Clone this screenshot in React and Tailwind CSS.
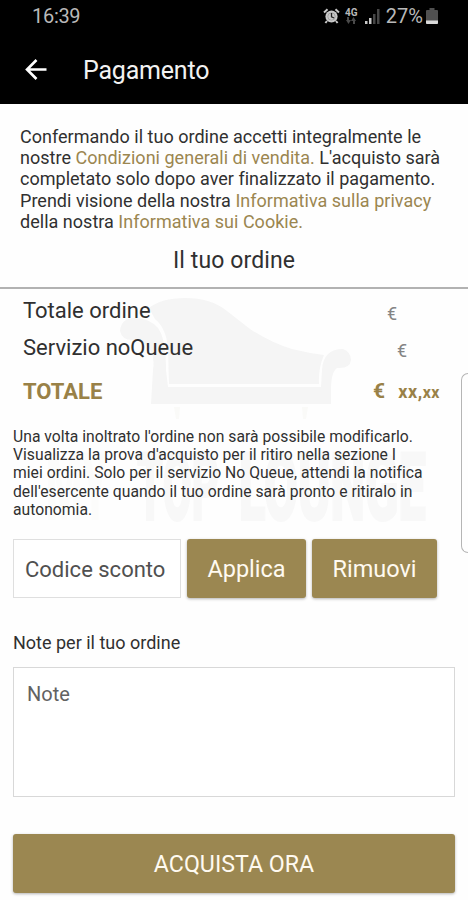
const GoldLink = ({ children }) => <a className="text-[#9b8650]">{children}</a>;

const StatusBar = () => (
  <div className="flex h-8 items-center justify-between pl-8 pr-[30px] text-[#b9b9b9]">
    <span className="text-[20px] leading-8 tracking-[-0.3px]">16:39</span>
    <div className="flex items-center">
      {/* Alarm */}
      <svg width="17" height="16" viewBox="0 0 17 16" className="mr-[5px]">
        <circle cx="8.5" cy="8.5" r="6.1" fill="#c8c8c8" />
        <path d="M1 4.5 4.5 1.3M16 4.5 12.5 1.3M4 13l-1.6 2M13 13l1.6 2" stroke="#c8c8c8" strokeWidth="2" fill="none" />
        <circle cx="8.5" cy="8.5" r="3.7" fill="none" stroke="#999" strokeWidth="0.8" />
        <path d="M8.5 5v3.8l2.6 1.2" stroke="#222" strokeWidth="1.3" fill="none" />
      </svg>
      {/* Network */}
      <div className="mr-[7px] flex w-[13px] flex-col items-center">
        <span className="text-[10px] font-bold leading-[9px]">4G</span>
        <svg width="10" height="7" viewBox="0 0 10 7" fill="#4a4a4a">
          <path d="M3 0v3h2L2.5 7 0 3h1V0zM7 7V4H5l2.5-4L10 4H9v3z" />
        </svg>
      </div>
      <svg width="15" height="15" viewBox="0 0 15 15" className="mr-[6px]">
        <path d="M0 12h2.5v3H0zM4 9h2.5v6H4z" fill="#c8c8c8" />
        <path d="M8 5h2.5v10H8zM12 0h2.5v15H12z" fill="#464646" />
      </svg>
      <span className="mr-[3px] text-[20px] leading-8">27%</span>
      <svg width="12" height="16" viewBox="0 0 12 16">
        <path d="M3.5 0h5v2H11q1 0 1 1v12q0 1-1 1H1q-1 0-1-1V3q0-1 1-1h2.5z" fill="#505050" />
        <path d="M0 12.5h12V15q0 1-1 1H1q-1 0-1-1z" fill="#dadada" />
      </svg>
    </div>
  </div>
);

const Header = () => (
  <div className="flex h-[72px] items-center pl-[25px] pt-1">
    <svg width="22" height="22" viewBox="0 0 22 22" fill="none" stroke="#fff" strokeWidth="2.6">
      <path d="M21.5 10.5H2.5M11.5 1 2 10.5l9.5 9.5" />
    </svg>
    <h1 className="ml-9 pt-0.5 text-[25px] leading-8 tracking-[-0.2px] text-[#f2f2f2]">Pagamento</h1>
  </div>
);

// Pale brand mark that sits behind the order summary
const Watermark = () => (
  <svg className="pointer-events-none absolute left-0 top-[184px] -z-10" width="468" height="240" viewBox="0 288 468 240" fill="#f5f5f5" aria-hidden="true">
    <path d="M149 308Q161 298 185 298Q211 298 227 311L250 329Q272 343 292 349Q308 353 324 355Q318 369 319 384H169L168 350Q167 329 155 319Z" />
    <path d="M120 331Q121 318 135 318Q149 318 158 328Q166 339 166 370L168 387H321L322 370Q323 349 343 349Q351 352 351 360Q350 369 337 368Q331 372 331 390V404H151L153 370Q156 350 143 343Q138 340 132 340Q122 340 120 331Z" />
    <path d="M174 407h6l-1 12h-3zM302 407h6l-2 12h-3z" fill="#fafaf8" />
    <g fontFamily="Roboto, sans-serif" fontWeight="900" fontSize="95" strokeWidth="2">
      <text x="46" y="520" textLength="62" lengthAdjust="spacingAndGlyphs" fill="#fcfcfb">MY</text>
      <text x="137" y="520" textLength="82" lengthAdjust="spacingAndGlyphs" fill="#f8f8f8" stroke="#f8f8f8">TOP</text>
      <text x="239" y="520" textLength="187" lengthAdjust="spacingAndGlyphs" fill="#f8f8f8" stroke="#f8f8f8">LOUNGE</text>
    </g>
  </svg>
);

const App = () => {
  return (
    <div className="h-[900px] w-[468px] overflow-hidden bg-[#fefefe] font-['Roboto',sans-serif] text-[#303030]">
      <header className="h-[104px] bg-black">
        <StatusBar />
        <Header />
      </header>

      <main className="relative isolate h-[796px]">
        <Watermark />

        <p className="whitespace-nowrap pl-5 pt-[22px] text-[18px] leading-[21.2px] tracking-[0.02px]">
          Confermando il tuo ordine accetti integralmente le<br />
          nostre <GoldLink>Condizioni generali di vendita.</GoldLink> L'acquisto sarà<br />
          completato solo dopo aver finalizzato il pagamento.<br />
          Prendi visione della nostra <GoldLink>Informativa sulla privacy</GoldLink><br />
          della nostra <GoldLink>Informativa sui Cookie.</GoldLink>
        </p>

        <h2 className="mt-3 h-[45px] border-b-2 border-[#b2b2b2] text-center text-[23px] leading-[33px] tracking-[0.1px]">
          Il tuo ordine
        </h2>

        {/* Summary */}
        <div className="pl-[23px] pr-7">
          <div className="flex h-[43px] items-center justify-between pr-[43px] text-[22px]">
            <span>Totale ordine</span>
            <span className="pt-1.5 text-[18px] text-[#858585]">€</span>
          </div>
          <div className="flex h-[30px] items-center justify-between pr-[33px] text-[22px]">
            <span>Servizio noQueue</span>
            <span className="pt-1.5 text-[18px] text-[#858585]">€</span>
          </div>
          <div className="mt-[13px] flex h-[32px] items-center justify-between font-bold text-[#998147]">
            <span className="text-[22px]">TOTALE</span>
            <span className="flex items-baseline pt-0.5">
              <span className="mr-[13px] text-[21px]">€</span>
              <span className="text-[18px] tracking-[0.6px]">xx,</span>
              <span className="text-[16px] tracking-[0.5px]">xx</span>
            </span>
          </div>
        </div>

        <p className="mt-[21px] whitespace-nowrap pl-[13px] text-[15.7px] leading-[18.2px] tracking-[0.02px]">
          Una volta inoltrato l'ordine non sarà possibile modificarlo.<br />
          Visualizza la prova d'acquisto per il ritiro nella sezione I<br />
          miei ordini. Solo per il servizio No Queue, attendi la notifica<br />
          dell'esercente quando il tuo ordine sarà pronto e ritiralo in<br />
          autonomia.
        </p>

        {/* Discount code */}
        <div className="mt-5 flex h-[59px] pl-[13px] text-[23.5px]">
          <div className="flex w-[168px] items-center border border-[#dfdfdf] bg-white pl-[11px] pt-0.5 text-[22px] text-[#505050]">Codice sconto</div>
          <button className="ml-1.5 w-[119px] rounded-[3px] bg-[#9b8751] pt-0.5 text-[#fffaf0] shadow-[0_1px_3px_#0000004d]">Applica</button>
          <button className="ml-1.5 w-[125px] rounded-[3px] bg-[#9b8751] pt-0.5 text-[#fffaf0] shadow-[0_1px_3px_#0000004d]">Rimuovi</button>
        </div>

        {/* Notes */}
        <label className="mt-[33px] block pl-[13px] text-[18px] leading-6">Note per il tuo ordine</label>
        <div className="ml-[13px] mt-3 h-[130px] w-[442px] border border-[#d8d8d8] bg-white px-[13px] pt-3 text-[20px] leading-[28px] text-[#626262]">Note</div>

        <button className="ml-[13px] mt-[37px] block h-[59px] w-[442px] rounded-[3px] bg-[#9b8751] pt-0.5 text-[23.2px] text-[#fffaf0] shadow-[0_1px_3px_#0000004d]">
          ACQUISTA ORA
        </button>

        {/* Edge panel handle */}
        <div className="absolute right-0 top-[269px] h-[180px] w-[7px] rounded-l-[7px] border border-r-0 border-[#b5b5b5]" />
      </main>
    </div>
  );
};

export default App;
